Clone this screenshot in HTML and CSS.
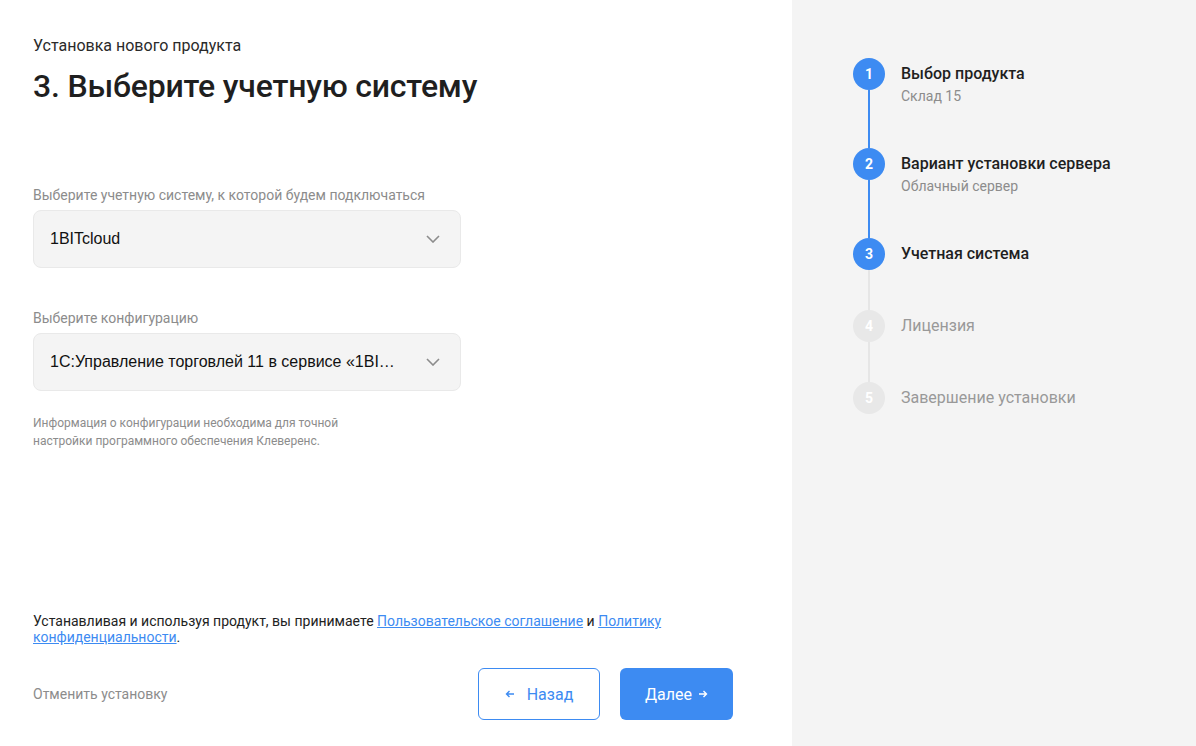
FILE: index.html
```html
<!doctype html>
<html lang="ru">
  <head>
    <meta charset="UTF-8" />
    <meta name="viewport" content="width=device-width, initial-scale=1.0" />
    <title>Установка нового продукта</title>
    <link rel="stylesheet" href="styles.css">
  </head>
  <body>
    <div class="main">
      <div class="subtitle">Установка нового продукта</div>
      <h1 class="title">3. Выберите учетную систему</h1>

      <div class="field first">
        <label class="field-label">Выберите учетную систему, к которой будем подключаться</label>
        <div class="select">
          <span class="select-value">1BITcloud</span>
          <svg class="chevron" width="14" height="8" viewBox="0 0 14 8"><path d="M1 1l6 6 6-6" fill="none" stroke="#8c8c8c" stroke-width="1.6"/></svg>
        </div>
      </div>

      <div class="field">
        <label class="field-label">Выберите конфигурацию</label>
        <div class="select">
          <span class="select-value">1С:Управление торговлей 11 в сервисе «1BITcloud»</span>
          <svg class="chevron" width="14" height="8" viewBox="0 0 14 8"><path d="M1 1l6 6 6-6" fill="none" stroke="#8c8c8c" stroke-width="1.6"/></svg>
        </div>
        <p class="hint">Информация о конфигурации необходима для точной настройки программного обеспечения Клеверенс.</p>
      </div>

      <div class="footer">
        <p class="agreement">Устанавливая и используя продукт, вы принимаете <a href="#">Пользовательское соглашение</a> и <a href="#">Политику конфиденциальности</a>.</p>
        <div class="actions">
          <a href="#" class="cancel">Отменить установку</a>
          <button class="btn btn-back">
            <svg width="10" height="10" viewBox="0 0 10 10"><path d="M9 5H1.5M4.5 2L1.5 5l3 3" fill="none" stroke="#3d8bf2" stroke-width="1.4"/></svg>
            Назад
          </button>
          <button class="btn btn-next">
            Далее
            <svg width="10" height="10" viewBox="0 0 10 10"><path d="M1 5h7.5M5.5 2l3 3-3 3" fill="none" stroke="#fff" stroke-width="1.4"/></svg>
          </button>
        </div>
      </div>
    </div>

    <div class="sidebar">
      <div class="step done">
        <div class="marker"><span class="num">1</span><span class="line"></span></div>
        <div class="step-text">
          <div class="step-title">Выбор продукта</div>
          <div class="step-sub">Склад 15</div>
        </div>
      </div>
      <div class="step done">
        <div class="marker"><span class="num">2</span><span class="line"></span></div>
        <div class="step-text">
          <div class="step-title">Вариант установки сервера</div>
          <div class="step-sub">Облачный сервер</div>
        </div>
      </div>
      <div class="step current">
        <div class="marker"><span class="num">3</span><span class="line"></span></div>
        <div class="step-text">
          <div class="step-title">Учетная система</div>
        </div>
      </div>
      <div class="step">
        <div class="marker"><span class="num">4</span><span class="line"></span></div>
        <div class="step-text">
          <div class="step-title">Лицензия</div>
        </div>
      </div>
      <div class="step last">
        <div class="marker"><span class="num">5</span></div>
        <div class="step-text">
          <div class="step-title">Завершение установки</div>
        </div>
      </div>
    </div>
  </body>
</html>
```

FILE: styles.css
```css
* {
  margin: 0;
  padding: 0;
  box-sizing: border-box;
  font-family: "Roboto", "Liberation Sans", sans-serif;
}
body {
  display: flex;
  height: 100vh;
  background-color: #fff;
  color: #222;
}
.main {
  width: 792px;
  display: flex;
  flex-direction: column;
  padding: 36px 59px 26px 33px;
}
.subtitle {
  font-size: 16px;
  line-height: 20px;
  color: #2a2a2a;
}
.title {
  margin-top: 10px;
  font-size: 32px;
  line-height: 40px;
  font-weight: 500;
  letter-spacing: -0.2px;
  color: #1f1f1f;
}
.field {
  margin-top: 40px;
}
.field.first {
  margin-top: 79px;
}
.field-label {
  display: block;
  font-size: 14px;
  line-height: 20px;
  color: #8c8c8c;
  margin-bottom: 5px;
}
.select {
  width: 428px;
  height: 58px;
  display: flex;
  align-items: center;
  justify-content: space-between;
  padding: 0 20px 0 16px;
  background-color: #f4f4f4;
  border: 1px solid #e9e9e9;
  border-radius: 8px;
}
.select-value {
  font-family: "Liberation Sans", Arial, sans-serif;
  font-size: 16px;
  color: #111;
  white-space: nowrap;
  overflow: hidden;
  text-overflow: ellipsis;
  max-width: 345px;
}
.chevron {
  flex-shrink: 0;
}
.hint {
  margin-top: 23px;
  max-width: 340px;
  font-size: 12px;
  line-height: 18px;
  color: #8c8c8c;
}
.footer {
  margin-top: auto;
}
.agreement {
  font-size: 14px;
  line-height: 16px;
  color: #222;
}
.agreement a {
  color: #3d8bf2;
}
.actions {
  display: flex;
  align-items: center;
  margin-top: 23px;
}
.cancel {
  font-size: 14px;
  color: #8c8c8c;
  text-decoration: none;
  margin-right: auto;
}
.btn {
  height: 52px;
  display: flex;
  align-items: center;
  justify-content: center;
  gap: 10px;
  border-radius: 6px;
  font-size: 16px;
  cursor: pointer;
}
.btn-back {
  width: 122px;
  background: #fff;
  border: 1px solid #3d8bf2;
  color: #3d8bf2;
  gap: 12px;
}
.btn-next {
  width: 113px;
  margin-left: 20px;
  background: #3d8bf2;
  border: none;
  color: #fff;
  gap: 6px;
}
.sidebar {
  flex: 1;
  background-color: #f4f4f4;
  padding: 58px 20px 0 61px;
}
.step {
  display: flex;
  gap: 16px;
}
.marker {
  width: 32px;
  display: flex;
  flex-direction: column;
  align-items: center;
}
.num {
  width: 32px;
  height: 32px;
  border-radius: 50%;
  background-color: #e8e8e8;
  color: #fff;
  font-size: 14px;
  font-weight: 700;
  display: flex;
  align-items: center;
  justify-content: center;
  flex-shrink: 0;
}
.line {
  flex: 1;
  width: 2px;
  background-color: #e6e6e6;
}
.step-text {
  padding-bottom: 40px;
}
.step-title {
  font-size: 16px;
  line-height: 32px;
  font-weight: 400;
  color: #999;
}
.step-sub {
  font-size: 14px;
  line-height: 18px;
  margin-top: -3px;
  padding-bottom: 3px;
  color: #8c8c8c;
}
.done .num,
.current .num {
  background-color: #3d8bf2;
}
.done .line {
  background-color: #3d8bf2;
}
.done .step-title,
.current .step-title {
  color: #1f1f1f;
  font-weight: 500;
}
```
